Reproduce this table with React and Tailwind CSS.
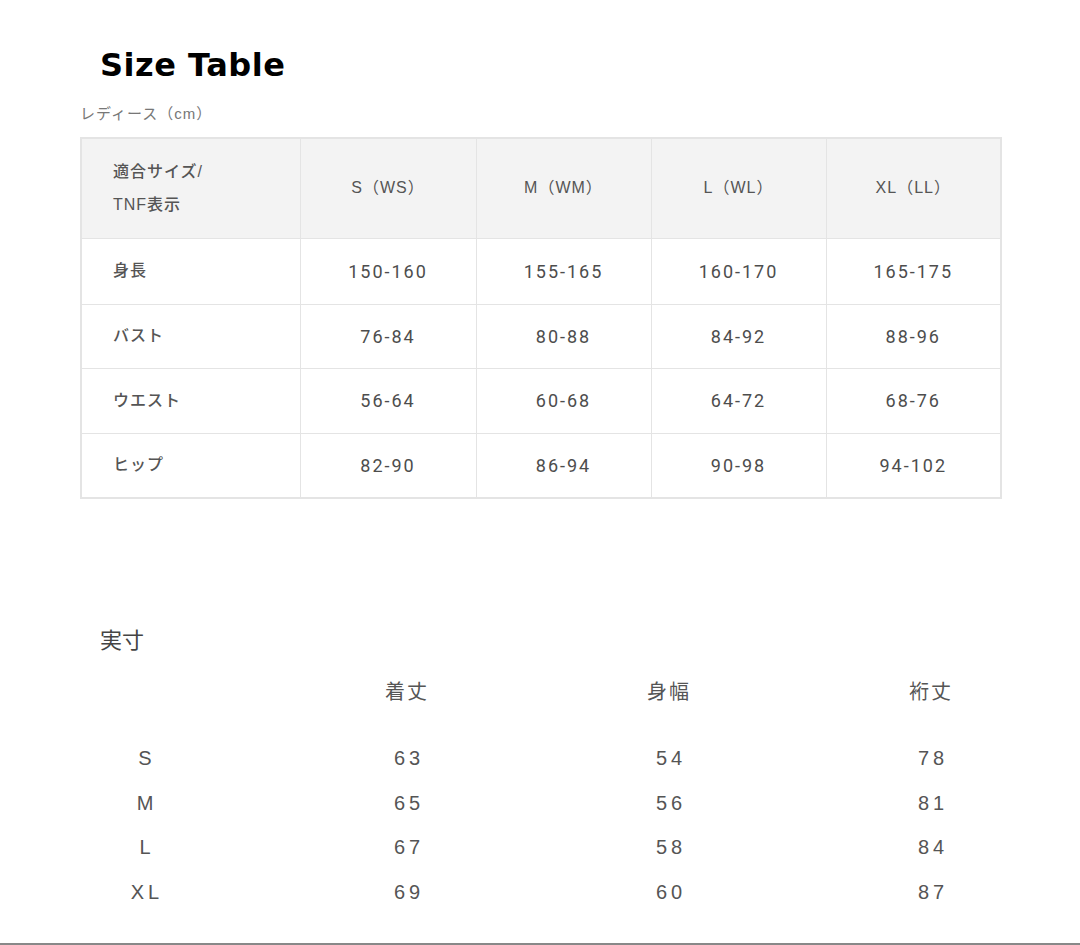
import React from "react";

const sizes = ["S（WS）", "M（WM）", "L（WL）", "XL（LL）"];

const rows = [
  { label: "身長", values: ["150-160", "155-165", "160-170", "165-175"], h: "h-[66px]" },
  { label: "バスト", values: ["76-84", "80-88", "84-92", "88-96"], h: "h-[64px]" },
  { label: "ウエスト", values: ["56-64", "60-68", "64-72", "68-76"], h: "h-[65px]" },
  { label: "ヒップ", values: ["82-90", "86-94", "90-98", "94-102"], h: "h-[65px]" },
];

const actual = [
  { size: "S", values: ["63", "54", "78"] },
  { size: "M", values: ["65", "56", "81"] },
  { size: "L", values: ["67", "58", "84"] },
  { size: "XL", values: ["69", "60", "87"] },
];

const cjk = "font-['Liberation_Sans','Noto_Sans_CJK_JP',sans-serif]";

const App = () => {
  return (
    <div className="w-[1080px] h-[945px] bg-white flex flex-col border-b-2 border-[#888888] overflow-hidden">
      <h1 className="pl-[100px] pt-[45px] text-[32px] leading-[40px] font-bold tracking-[0.5px] text-black font-['DejaVu_Sans',sans-serif]">
        Size Table
      </h1>
      <p className={`pl-[80px] mt-[19px] text-[15px] leading-[20px] text-[#777] tracking-[1px] ${cjk}`}>
        レディース（cm）
      </p>

      {/* ladies size table */}
      <table className={`ml-[80px] mt-[13px] w-[920px] table-fixed border-collapse border-2 border-[#e4e4e4] text-[#555] ${cjk}`}>
        <colgroup>
          <col className="w-[219px]" />
          <col className="w-[176px]" />
          <col className="w-[175px]" />
          <col className="w-[175px]" />
          <col className="w-[175px]" />
        </colgroup>
        <thead>
          <tr className="h-[100px] bg-[#f3f3f3]">
            <th className="border border-[#e4e4e4] pl-[31px] text-left font-medium text-[16px] leading-[33px] tracking-[1px]">
              適合サイズ/
              <br />
              TNF表示
            </th>
            {sizes.map((s) => (
              <th key={s} className="border border-[#e4e4e4] font-normal text-[16px] tracking-[1px]">
                {s}
              </th>
            ))}
          </tr>
        </thead>
        <tbody>
          {rows.map((row) => (
            <tr key={row.label} className={row.h}>
              <td className="border border-[#e4e4e4] pl-[31px] text-[16px] font-medium tracking-[1px]">{row.label}</td>
              {row.values.map((v, i) => (
                <td
                  key={i}
                  className="border border-[#e4e4e4] text-center text-[18px] font-normal tracking-[2px] text-[#4d4d4d] font-['Roboto',sans-serif]"
                >
                  {v}
                </td>
              ))}
            </tr>
          ))}
        </tbody>
      </table>

      {/* actual measurements */}
      <h2 className={`pl-[100px] mt-[127px] text-[22px] leading-[30px] text-[#444] ${cjk}`}>実寸</h2>
      <div className={`ml-[14px] mt-[14px] text-[#555] ${cjk}`}>
        <div className="grid grid-cols-[262px_262px_262px_262px] h-[44px] items-center text-center text-[20px] tracking-[2px]">
          <span />
          <span>着丈</span>
          <span>身幅</span>
          <span>裄丈</span>
        </div>
        <div className="mt-[22px]">
          {actual.map((r) => (
            <div
              key={r.size}
              className="grid grid-cols-[262px_262px_262px_262px] h-[44.5px] items-center text-center text-[20px] tracking-[4px] pl-[2px]"
            >
              <span>{r.size}</span>
              {r.values.map((v, i) => (
                <span key={i}>{v}</span>
              ))}
            </div>
          ))}
        </div>
      </div>
    </div>
  );
};

export default App;
